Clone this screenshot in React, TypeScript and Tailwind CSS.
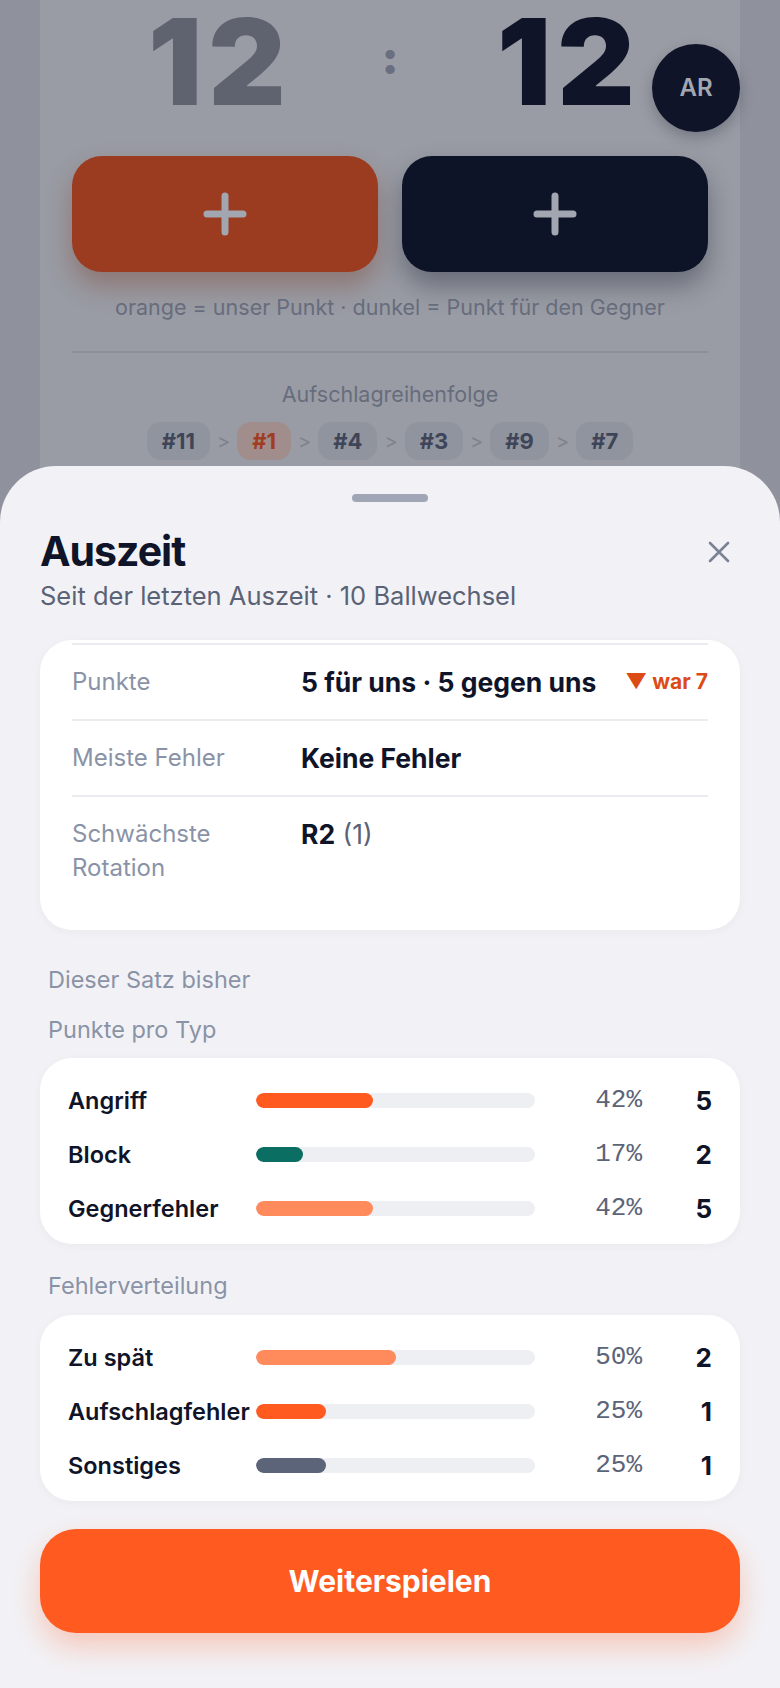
import React from 'react';

type BarRow = { label: string; pct: number; count: number; color: string };

const punkteProTyp: BarRow[] = [
  { label: 'Angriff', pct: 42, count: 5, color: 'bg-[#ff5a1f]' },
  { label: 'Block', pct: 17, count: 2, color: 'bg-[#0b6e63]' },
  { label: 'Gegnerfehler', pct: 42, count: 5, color: 'bg-[#ff8a5b]' },
];

const fehlerverteilung: BarRow[] = [
  { label: 'Zu spät', pct: 50, count: 2, color: 'bg-[#ff8a5b]' },
  { label: 'Aufschlagfehler', pct: 25, count: 1, color: 'bg-[#ff5a1f]' },
  { label: 'Sonstiges', pct: 25, count: 1, color: 'bg-[#5b6478]' },
];

const serveOrder = ['#11', '#1', '#4', '#3', '#9', '#7'];

function PlusIcon() {
  return (
    <svg width="44" height="44" viewBox="0 0 44 44" fill="none">
      <path d="M22 4v36M4 22h36" stroke="#a2a6b0" strokeWidth="7" strokeLinecap="round" />
    </svg>
  );
}

function BarCard({ rows }: { rows: BarRow[] }) {
  return (
    <div className="bg-white rounded-[32px] px-[28px] py-[23px] flex flex-col gap-[22px] shadow-[0_2px_10px_rgba(15,20,40,0.04)]">
      {rows.map((r) => (
        <div key={r.label} className="grid grid-cols-[188px_279px_1fr_70px] items-center h-[32px]">
          <span className="text-[23.5px] font-semibold text-[#0f1428] whitespace-nowrap">{r.label}</span>
          <div className="h-[15px] rounded-full bg-[#eeeff3] overflow-hidden">
            <div className={`h-full rounded-full ${r.color}`} style={{ width: `${r.pct}%` }} />
          </div>
          <span className="text-right text-[26px] text-[#5b6478] font-['Liberation_Mono',monospace]">{r.pct}%</span>
          <span className="text-right text-[26px] font-bold text-[#0f1428]">{r.count}</span>
        </div>
      ))}
    </div>
  );
}

function InfoRow({ label, children }: { label: React.ReactNode; children: React.ReactNode }) {
  return (
    <div className="flex border-t-2 border-[#ececf0] py-[20px]">
      <div className="w-[229px] shrink-0 text-[24px] leading-[34px] text-[#8a93a6]">{label}</div>
      <div className="flex-1 flex items-start justify-between leading-[34px]">{children}</div>
    </div>
  );
}

export default function App() {
  return (
    <div className="relative w-[780px] h-[1688px] overflow-hidden bg-[#8f929c] font-[Inter,sans-serif]">
      {/* dimmed scoreboard behind the sheet */}
      <div className="mx-[40px] -mt-[30px] pt-[30px] h-[560px] rounded-[32px] bg-[#999ca4]">
        <div className="relative flex h-[156px] px-[32px]">
          <div className="w-[306px] flex justify-center pr-[10px]">
            <span className="mt-[2px] text-[120px] leading-none font-black tracking-[0.05em] text-[#5f6370]">12</span>
          </div>
          <div className="w-[24px] flex justify-center">
            <span className="mt-[34px] text-[46px] leading-none font-black text-[#6a6f80]">:</span>
          </div>
          <div className="w-[306px] flex justify-center pl-[28px]">
            <span className="mt-[2px] text-[120px] leading-none font-black tracking-[0.05em] text-[#0f1428]">12</span>
          </div>
          <div className="absolute right-0 top-[44px] w-[88px] h-[88px] rounded-full bg-[#0f1428] flex items-center justify-center shadow-[0_6px_14px_rgba(15,20,40,0.25)]">
            <span className="text-[24px] font-semibold text-[#a3a7b1]">AR</span>
          </div>
        </div>

        <div className="grid grid-cols-2 gap-[24px] px-[32px]">
          <button className="h-[116px] rounded-[30px] bg-[#9b3c21] flex items-center justify-center shadow-[0_14px_26px_rgba(120,50,30,0.35)]">
            <PlusIcon />
          </button>
          <button className="h-[116px] rounded-[30px] bg-[#0e1428] flex items-center justify-center shadow-[0_14px_26px_rgba(15,20,40,0.35)]">
            <PlusIcon />
          </button>
        </div>

        <p className="mt-[22px] text-center text-[21.5px] leading-[26px] text-[#676c7d]">
          orange = unser Punkt · dunkel = Punkt für den Gegner
        </p>

        <div className="mx-[32px] mt-[31px] h-[2px] bg-[#8c909b]" />

        <p className="mt-[28px] text-center text-[21.5px] leading-[26px] text-[#676c7d]">Aufschlagreihenfolge</p>

        <div className="mt-[15px] flex items-center justify-center gap-[7px]">
          {serveOrder.map((n, i) => (
            <React.Fragment key={n}>
              {i > 0 && <span className="text-[20px] text-[#7e828e]">&gt;</span>}
              <span
                className={`h-[38px] px-[15px] rounded-[14px] flex items-center text-[22px] font-bold ${
                  n === '#1' ? 'bg-[#a18d8b] text-[#a03c1f]' : 'bg-[#90949e] text-[#3f4558]'
                }`}
              >
                {n}
              </span>
            </React.Fragment>
          ))}
        </div>
      </div>

      {/* bottom sheet */}
      <div className="absolute inset-x-0 top-[466px] bottom-0 rounded-t-[56px] bg-[#f2f2f6] px-[40px]">
        <div className="mx-auto mt-[28px] w-[76px] h-[8px] rounded-full bg-[#a0a6b5]" />

        <div className="mt-[29px] flex items-center justify-between">
          <h1 className="text-[41px] leading-none font-bold tracking-tight text-[#0f1428]">Auszeit</h1>
          <button className="mr-[8px] w-[26px] h-[26px] flex items-center justify-center">
            <svg width="22" height="22" viewBox="0 0 22 22" fill="none">
              <path d="M2 2l18 18M20 2L2 20" stroke="#7a8396" strokeWidth="2.6" strokeLinecap="round" />
            </svg>
          </button>
        </div>
        <p className="mt-[8px] text-[25.5px] leading-[32px] text-[#5b6275]">Seit der letzten Auszeit · 10 Ballwechsel</p>

        <div className="mt-[28px] bg-white rounded-[32px] px-[32px] pt-[3px] pb-[25px] shadow-[0_2px_10px_rgba(15,20,40,0.04)]">
          <InfoRow label="Punkte">
            <span className="text-[26.5px] font-bold text-[#0f1428]">5 für uns · 5 gegen uns</span>
            <span className="text-[21px] font-bold text-[#dc4a16]">▼ war 7</span>
          </InfoRow>
          <InfoRow label="Meiste Fehler">
            <span className="text-[26.5px] font-bold text-[#0f1428]">Keine Fehler</span>
          </InfoRow>
          <InfoRow
            label={
              <>
                Schwächste
                <br />
                Rotation
              </>
            }
          >
            <span className="text-[26.5px] text-[#5b6275]">
              <span className="font-bold text-[#0f1428]">R2</span> (1)
            </span>
          </InfoRow>
        </div>

        <p className="mt-[34px] px-[8px] text-[23.5px] leading-[32px] text-[#8a93a6]">Dieser Satz bisher</p>
        <p className="mt-[18px] px-[8px] text-[23.5px] leading-[32px] text-[#8a93a6]">Punkte pro Typ</p>
        <div className="mt-[12px]">
          <BarCard rows={punkteProTyp} />
        </div>

        <p className="mt-[26px] px-[8px] text-[23.5px] leading-[32px] text-[#8a93a6]">Fehlerverteilung</p>
        <div className="mt-[13px]">
          <BarCard rows={fehlerverteilung} />
        </div>

        <button className="mt-[28px] w-full h-[104px] rounded-[36px] bg-[#ff5a1f] text-white text-[30px] font-bold shadow-[0_14px_30px_rgba(255,90,31,0.28)]">
          Weiterspielen
        </button>
      </div>
    </div>
  );
}
